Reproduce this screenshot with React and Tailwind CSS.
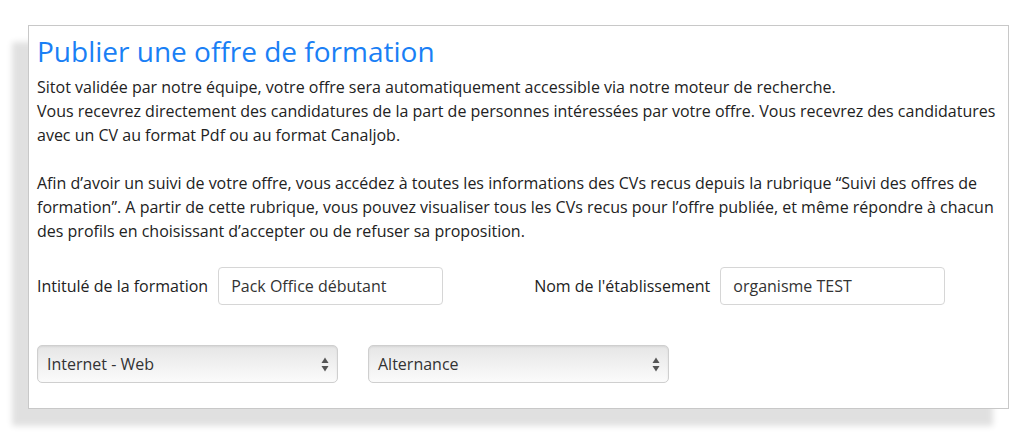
import React from 'react';

const Arrows = () => (
  <svg width="8" height="15" viewBox="0 0 8 15" className="shrink-0">
    <path d="M4 0.5 L7.5 6 L0.5 6 Z" fill="#555" />
    <path d="M4 14.5 L7.5 9 L0.5 9 Z" fill="#555" />
  </svg>
);

const FakeSelect = ({ value }) => (
  <div className="w-[301px] h-[38px] flex items-center justify-between pl-[9px] pr-[8px] rounded-[5px] border border-[#cfcfcf] bg-gradient-to-b from-[#e6e6e6] to-[#fbfbfb] shadow-[inset_0_1px_2px_rgba(0,0,0,0.08)] text-[16px] text-[#333]">
    <span>{value}</span>
    <Arrows />
  </div>
);

const Field = ({ value }) => (
  <div className="w-[225px] h-[38px] flex items-center px-[12px] rounded-[4px] border border-[#d6d6d6] bg-white text-[16px] text-[#333]">
    {value}
  </div>
);

export default function App() {
  return (
    <main className="w-[1021px] h-[441px] bg-white pt-[25px] pl-[28px] font-['Open_Sans',sans-serif] text-[#222]">
      <section className="w-[981px] h-[384px] bg-white border border-[#c8c8c8] shadow-[-16px_17px_6px_rgba(0,0,0,0.12)] pl-[8px] pr-[8px] pt-[6px]">
        <h1 className="text-[28px] leading-[38px] text-[#1a7ff5]">Publier une offre de formation</h1>
        <div className="mt-[5px] text-[16px] leading-[24px]">
          <p>Sitot validée par notre équipe, votre offre sera automatiquement accessible via notre moteur de recherche.</p>
          <p>Vous recevrez directement des candidatures de la part de personnes intéressées par votre offre. Vous recevrez des candidatures avec un CV au format Pdf ou au format Canaljob.</p>
          <p className="mt-[24px]">
            Afin d’avoir un suivi de votre offre, vous accédez à toutes les informations des CVs recus depuis la rubrique “Suivi des offres de formation”. A partir de cette rubrique, vous pouvez visualiser tous les CVs recus pour l’offre publiée, et même répondre à chacun des profils en choisissant d’accepter ou de refuser sa proposition.
          </p>
        </div>

        <div className="mt-[24px] flex items-center text-[16px]">
          <div className="flex items-center gap-[10px]">
            <label>Intitulé de la formation</label>
            <Field value="Pack Office débutant" />
          </div>
          <div className="ml-[91px] flex items-center gap-[10px]">
            <label>Nom de l'établissement</label>
            <Field value="organisme TEST" />
          </div>
        </div>

        <div className="mt-[40px] flex items-center gap-[30px]">
          <FakeSelect value="Internet - Web" />
          <FakeSelect value="Alternance" />
        </div>
      </section>
    </main>
  );
}
